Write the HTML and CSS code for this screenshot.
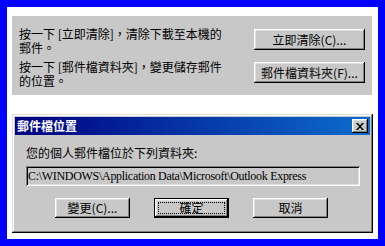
FILE: index.html
```html
<html>
	<head>
		<meta charset="utf-8">
		<link rel="stylesheet" href="styles.css">
	</head>
	<body>
		<div class="frame">
			<div class="panel">
				<p class="note">按一下 [立即清除]，清除下載至本機的郵件。</p>
				<button class="btn wide">立即清除(<u>C</u>)...</button>
				<p class="note">按一下 [郵件檔資料夾]，變更儲存郵件的位置。</p>
				<button class="btn wide">郵件檔資料夾(<u>F</u>)...</button>
			</div>
			<div class="dialog">
				<div class="titlebar">
					<span class="title">郵件檔位置</span>
					<button class="close">
						<svg width="8" height="7" viewBox="0 0 8 7">
							<path d="M0 0h2l2 2.5L6 0h2L5 3.5 8 7H6L4 4.5 2 7H0l3-3.5z" fill="#000"/>
						</svg>
					</button>
				</div>
				<div class="dialog-body">
					<p class="label">您的個人郵件檔位於下列資料夾:</p>
					<div class="field">C:\WINDOWS\Application Data\Microsoft\Outlook Express</div>
					<div class="actions">
						<button class="btn">變更(<u>C</u>)...</button>
						<button class="btn default">確定</button>
						<button class="btn">取消</button>
					</div>
				</div>
			</div>
		</div>
	</body>
</html>
```

FILE: styles.css
```css
* {
	box-sizing: border-box;
}
body {
	margin: 0;
	padding: 7px;
	background-color: #0000ff;
	font-family: "Noto Sans CJK TC", "Liberation Sans", sans-serif;
	font-size: 12px;
	color: #000;
}
.frame {
	background-color: #fff;
	height: 232px;
	padding: 9px 6px 0 5px;
}
.panel {
	height: 79px;
	background-color: #c8c8c8;
	padding: 11px 7px 0 7px;
	display: grid;
	grid-template-columns: 1fr 111px;
	row-gap: 5px;
	align-items: start;
	align-content: start;
}
.note {
	margin: 0;
	width: 206px;
	line-height: 14px;
}
.btn {
	font-family: inherit;
	font-size: 12px;
	color: #000;
	background-color: #c8c8c8;
	border: 0;
	padding: 0;
	height: 20px;
	width: 75px;
	line-height: 18px;
	box-shadow: inset -1px -1px #000, inset 1px 1px #fff, inset -2px -2px #808080, inset 2px 2px #dfdfdf;
}
.btn u {
	text-decoration: none;
}
.panel .btn {
	width: 111px;
	height: 21px;
	margin-top: 2px;
}
.dialog {
	width: 361px;
	height: 119px;
	margin-top: 19px;
	padding: 3px;
	background-color: #c8c8c8;
	box-shadow: inset -1px -1px #000, inset 1px 1px #dfdfdf, inset -2px -2px #808080, inset 2px 2px #fff;
}
.titlebar {
	height: 18px;
	background: linear-gradient(90deg, #000080, #0c6ccc);
	display: flex;
	align-items: center;
	justify-content: space-between;
	padding: 0 2px 0 2px;
}
.title {
	color: #fff;
	font-weight: bold;
	font-size: 12px;
	line-height: 18px;
}
.close {
	width: 16px;
	height: 14px;
	padding: 0;
	border: 0;
	background-color: #c8c8c8;
	display: flex;
	align-items: center;
	justify-content: center;
	box-shadow: inset -1px -1px #000, inset 1px 1px #fff, inset -2px -2px #808080, inset 2px 2px #dfdfdf;
}
.dialog-body {
	padding: 11px 10px 0 11px;
}
.label {
	margin: 0;
	line-height: 13px;
}
.field {
	margin-top: 7px;
	height: 20px;
	padding-left: 2px;
	font-family: "Liberation Serif", serif;
	font-size: 12px;
	letter-spacing: -0.3px;
	line-height: 20px;
	white-space: nowrap;
	box-shadow: inset 1px 1px #808080, inset -1px -1px #fff, inset 2px 2px #000, inset -2px -2px #dfdfdf;
}
.actions {
	margin-top: 12px;
	display: flex;
	justify-content: center;
	gap: 24px;
	padding-right: 3px;
}
.btn.default {
	position: relative;
	border: 1px solid #000;
}
.btn.default::after {
	content: "";
	position: absolute;
	inset: 3px;
	border: 1px dotted #000;
}
```
